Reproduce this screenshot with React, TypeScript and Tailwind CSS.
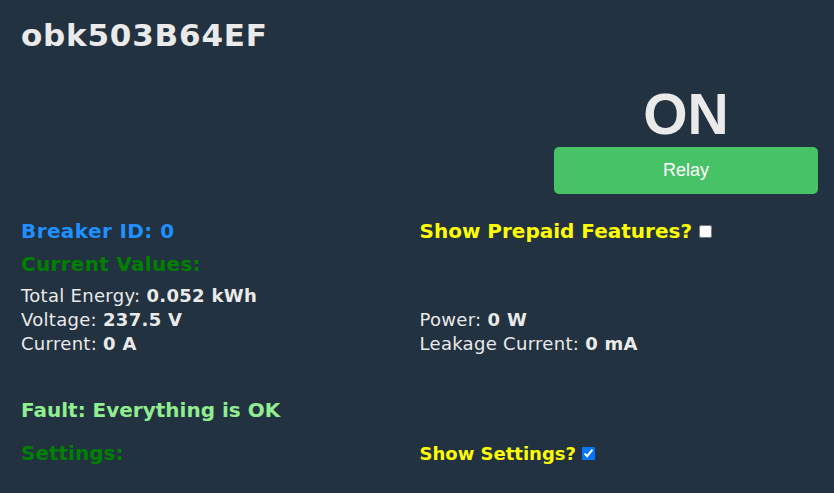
export default function App() {
  return (
    <div className="min-h-screen bg-[#223240] text-[#eaeaea] pl-[21px] pr-4 pt-[17px] font-['DejaVu_Sans',Verdana,sans-serif]">
      {/* title */}
      <h1 className="text-[31px] leading-[36px] tracking-[0.8px] font-bold">obk503B64EF</h1>

      {/* relay state + toggle */}
      <div className="grid grid-cols-2 mt-[29px]">
        <div />
        <div className="flex flex-col items-end">
          <div className="w-[264px] text-center font-['Liberation_Sans',Arial,sans-serif] text-[57px] leading-[64px] font-bold">
            ON
          </div>
          <button className="w-[264px] h-[47px] mt-px rounded-[5px] bg-[#47c266] text-white text-[18px] font-['Liberation_Sans',Arial,sans-serif]">
            Relay
          </button>
        </div>
      </div>

      {/* breaker id / prepaid */}
      <div className="grid grid-cols-2 items-baseline mt-[26px] text-[20px] leading-[23px] font-bold">
        <div className="text-[#1e90ff] tracking-[0.4px]">Breaker ID: 0</div>
        <div className="text-[#ffff00]">
          Show Prepaid Features? <input type="checkbox" className="w-[13px] h-[13px]" />
        </div>
      </div>

      <div className="mt-[10px] text-[20px] leading-[23px] font-bold tracking-[0.3px] text-[#008000]">Current Values:</div>

      {/* values */}
      <div className="grid grid-cols-2 mt-[8px] text-[18px] leading-[24px] tracking-[0.3px]">
        <div>
          Total Energy: <b>0.052 kWh</b>
        </div>
        <div />
        <div>
          Voltage: <b>237.5 V</b>
        </div>
        <div>
          Power: <b>0 W</b>
        </div>
        <div>
          Current: <b>0 A</b>
        </div>
        <div>
          Leakage Current: <b>0 mA</b>
        </div>
      </div>

      <div className="mt-[43px] text-[20px] leading-[23px] font-bold text-[#90ee90]">Fault: Everything is OK</div>

      {/* settings */}
      <div className="grid grid-cols-2 items-baseline mt-[20px] font-bold">
        <div className="text-[20px] leading-[23px] text-[#008000]">Settings:</div>
        <div className="text-[18px] leading-[21px] text-[#ffff00]">
          Show Settings? <input type="checkbox" defaultChecked className="w-[13px] h-[13px]" />
        </div>
      </div>
    </div>
  );
}
